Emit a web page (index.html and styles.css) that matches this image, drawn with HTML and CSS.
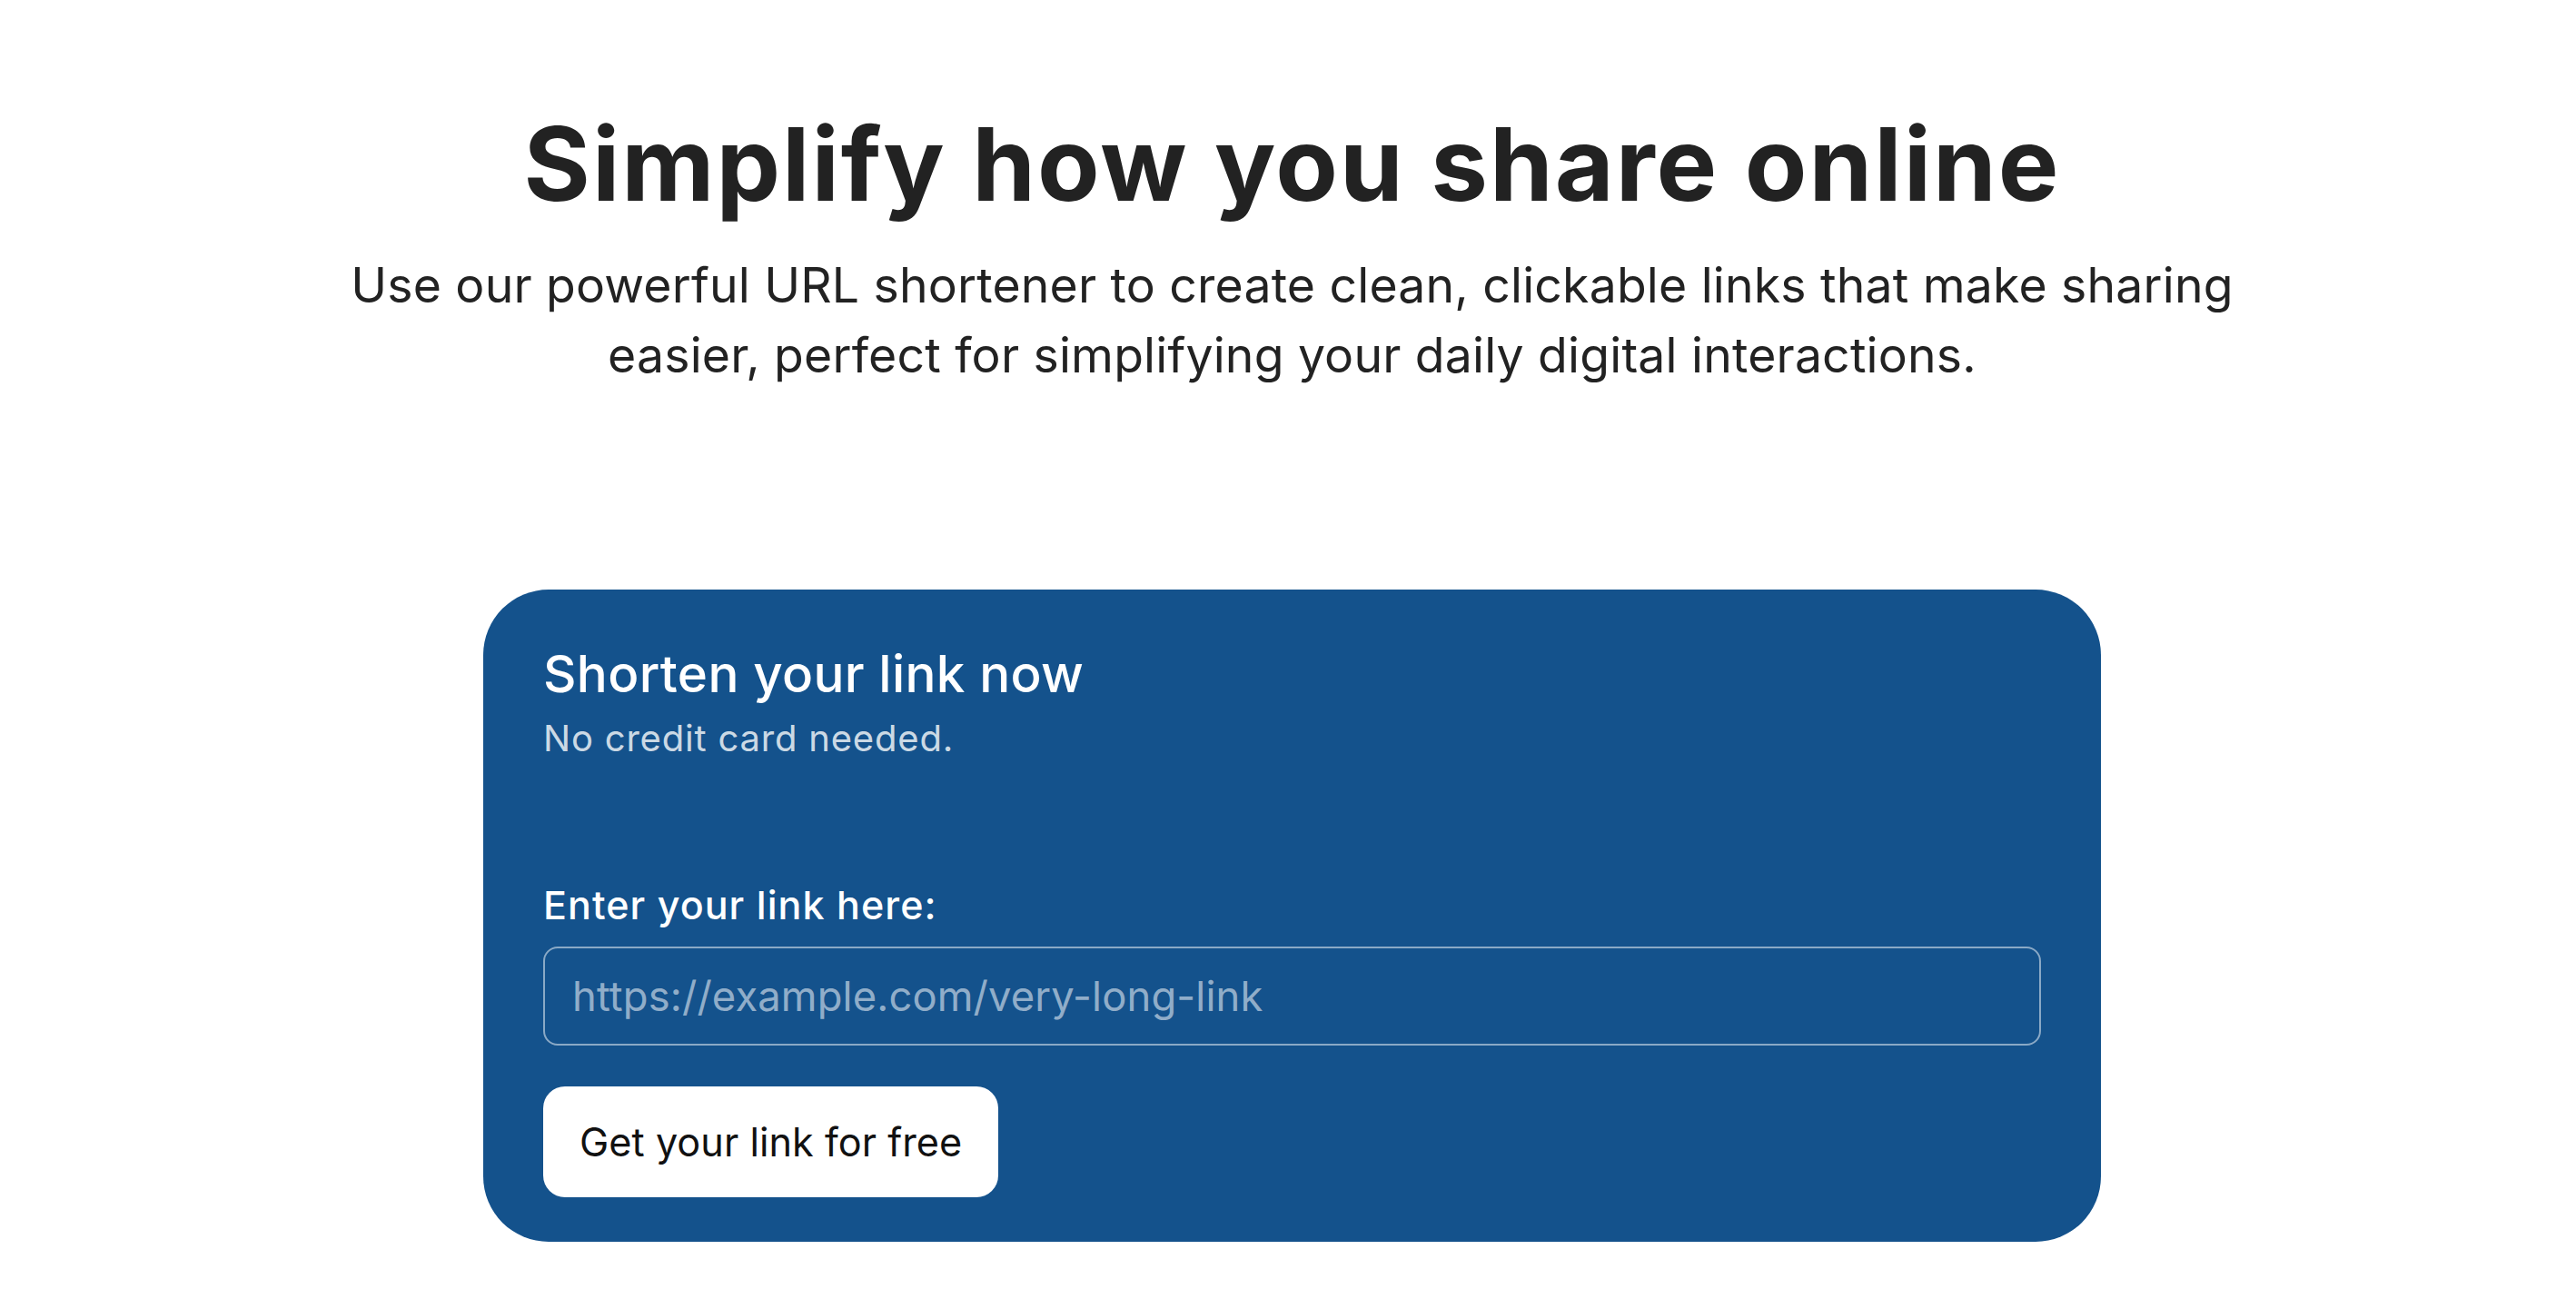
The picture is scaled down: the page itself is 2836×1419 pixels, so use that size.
FILE: index.html
```html
<!DOCTYPE html>
<html lang="en">
<head>
<meta charset="utf-8">
<title>Simplify how you share online</title>
<link rel="stylesheet" href="styles.css">
</head>
<body>
<main class="page">
  <section class="hero">
    <h1 class="hero-title">Simplify how you share online</h1>
    <p class="hero-sub">Use our powerful URL shortener to create clean, clickable links that make sharing easier, perfect for simplifying your daily digital interactions.</p>
  </section>
  <section class="card">
    <h2 class="card-title">Shorten your link now</h2>
    <p class="card-note">No credit card needed.</p>
    <form class="card-form">
      <label class="field-label" for="url">Enter your link here:</label>
      <input class="field-input" id="url" type="text" placeholder="https://example.com/very-long-link">
      <button class="cta" type="button">Get your link for free</button>
    </form>
  </section>
</main>
</body>
</html>
```

FILE: styles.css
```css
* { box-sizing: border-box; }

html, body {
  margin: 0;
  padding: 0;
  background: #ffffff;
}

body {
  font-family: "Inter", "Open Sans", sans-serif;
  color: #222222;
}

.page {
  display: flex;
  flex-direction: column;
  align-items: center;
  padding: 113px 0 0 9px;
}

.hero {
  display: flex;
  flex-direction: column;
  align-items: center;
  text-align: center;
}

.hero-title {
  margin: 0;
  font-size: 112px;
  line-height: 1.2;
  font-weight: 700;
  letter-spacing: 2px;
  color: #222222;
}

.hero-sub {
  margin: 28px 0 0;
  max-width: 2140px;
  font-size: 53.5px;
  line-height: 77px;
  font-weight: 400;
  letter-spacing: 0.2px;
  color: #222222;
}

.card {
  margin-top: 220px;
  width: 1781px;
  padding: 59px 66px 49px;
  background: #14528c;
  border-radius: 72px;
  color: #ffffff;
  display: flex;
  flex-direction: column;
}

.card-title {
  margin: 0;
  font-size: 56.5px;
  line-height: 1.2;
  font-weight: 500;
  letter-spacing: 0.35px;
  color: #ffffff;
}

.card-note {
  margin: 9px 0 0;
  font-size: 40px;
  line-height: 56px;
  letter-spacing: 0.8px;
  font-weight: 400;
  color: rgba(255, 255, 255, 0.8);
}

.card-form {
  margin-top: 128px;
  display: flex;
  flex-direction: column;
  align-items: flex-start;
}

.field-label {
  font-size: 43px;
  line-height: 1.3;
  font-weight: 500;
  letter-spacing: 1.05px;
  color: #ffffff;
}

.field-input {
  margin-top: 17px;
  width: 100%;
  height: 109px;
  padding: 0 30px;
  background: transparent;
  border: 2px solid rgba(255, 255, 255, 0.5);
  border-radius: 16px;
  font-family: inherit;
  font-size: 45.3px;
  font-weight: 400;
  letter-spacing: 0.15px;
  color: #ffffff;
  outline: none;
}

.field-input::placeholder {
  color: rgba(255, 255, 255, 0.55);
}

.cta {
  margin-top: 45px;
  height: 122px;
  padding: 0 40px;
  background: #ffffff;
  border: none;
  border-radius: 24px;
  font-family: inherit;
  font-size: 43.2px;
  font-weight: 400;
  letter-spacing: 0.05px;
  color: #111111;
  cursor: pointer;
}
```
